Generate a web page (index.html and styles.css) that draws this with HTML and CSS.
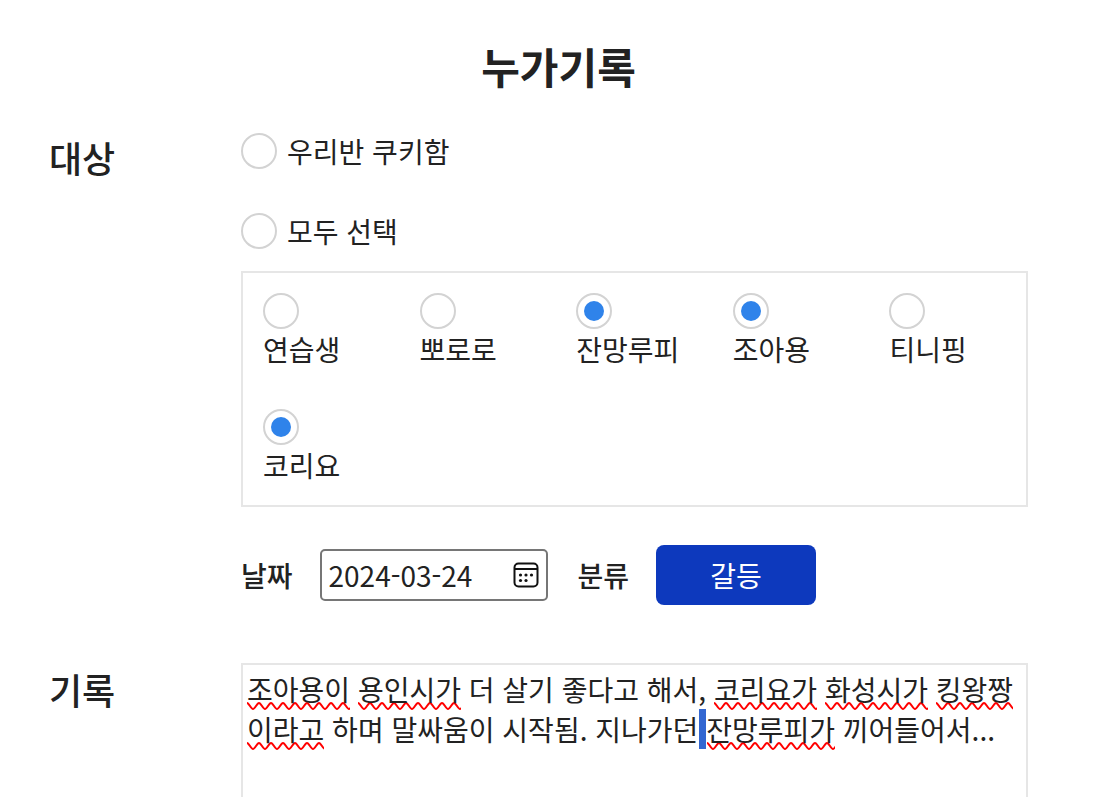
FILE: index.html
```html
<!DOCTYPE html>
<html lang="ko">
<head>
    <meta charset="UTF-8">
    <meta name="viewport" content="width=device-width, initial-scale=1.0">
    <title>누가기록</title>
    <link rel="stylesheet" href="styles.css">
</head>
<body>
    <form class="container">
        <h1>누가기록</h1>

        <section class="row">
            <h2>대상</h2>
            <div class="content">
                <label class="check"><input type="checkbox" name="cookie">우리반 쿠키함</label>
                <label class="check"><input type="checkbox" name="all">모두 선택</label>

                <div class="students">
                    <label class="student"><input type="checkbox" name="student">연습생</label>
                    <label class="student"><input type="checkbox" name="student">뽀로로</label>
                    <label class="student"><input type="checkbox" name="student" checked>잔망루피</label>
                    <label class="student"><input type="checkbox" name="student" checked>조아용</label>
                    <label class="student"><input type="checkbox" name="student">티니핑</label>
                    <label class="student"><input type="checkbox" name="student" checked>코리요</label>
                </div>

                <div class="options">
                    <div class="option">
                        <label for="date">날짜</label>
                        <div class="date-box">
                            <input type="text" id="date" value="2024-03-24">
                            <button type="button" class="calendar" aria-label="달력 열기">
                                <svg width="26" height="26" viewBox="0 0 26 26">
                                    <rect x="1.5" y="1.5" width="23" height="23" rx="4" fill="none" stroke="#111" stroke-width="2"/>
                                    <path d="M2 7h22" stroke="#111" stroke-width="2"/>
                                    <g fill="#111">
                                        <circle cx="7.5" cy="13" r="1.6"/>
                                        <circle cx="13" cy="13" r="1.6"/>
                                        <circle cx="18.5" cy="13" r="1.6"/>
                                        <circle cx="7.5" cy="18.5" r="1.6"/>
                                        <circle cx="13" cy="18.5" r="1.6"/>
                                    </g>
                                </svg>
                            </button>
                        </div>
                    </div>
                    <div class="option">
                        <label for="category">분류</label>
                        <button type="button" class="category" id="category">갈등</button>
                    </div>
                </div>
            </div>
        </section>

        <section class="row">
            <h2><label for="record">기록</label></h2>
            <div class="content record">
                <svg class="marks" width="775" height="80" aria-hidden="true">
                    <defs>
                        <pattern id="wave" width="12" height="8" patternUnits="userSpaceOnUse">
                            <path d="M-3 4C-2 1 -1 1 0 1C2 1 4 7 6 7C8 7 10 1 12 1C13 1 14 1 15 4" fill="none" stroke="red" stroke-width="2"/>
                        </pattern>
                    </defs>
                    <rect x="452" y="40" width="7" height="40" fill="#3367d1"/>
                    <svg x="0" y="33" width="103" height="8"><rect width="100%" height="8" fill="url(#wave)"/></svg>
                    <svg x="111" y="33" width="103" height="8"><rect width="100%" height="8" fill="url(#wave)"/></svg>
                    <svg x="467" y="33" width="103" height="8"><rect width="100%" height="8" fill="url(#wave)"/></svg>
                    <svg x="578" y="33" width="103" height="8"><rect width="100%" height="8" fill="url(#wave)"/></svg>
                    <svg x="689" y="33" width="77" height="8"><rect width="100%" height="8" fill="url(#wave)"/></svg>
                    <svg x="0" y="73" width="77" height="8"><rect width="100%" height="8" fill="url(#wave)"/></svg>
                    <svg x="460" y="73" width="128" height="8"><rect width="100%" height="8" fill="url(#wave)"/></svg>
                </svg>
                <textarea id="record" rows="4" spellcheck="false">조아용이 용인시가 더 살기 좋다고 해서, 코리요가 화성시가 킹왕짱이라고 하며 말싸움이 시작됨. 지나가던 잔망루피가 끼어들어서...</textarea>
            </div>
        </section>
    </form>
</body>
</html>
```
FILE: styles.css
```css
* {
    box-sizing: border-box;
}

body {
    margin: 0;
    background-color: #fff;
    color: #222;
    font-family: "Noto Sans CJK KR", sans-serif;
    font-size: 28px;
    line-height: 40px;
}

input,
button,
textarea {
    margin: 0;
    color: inherit;
    font: inherit;
}

.container {
    padding: 36px 41px 0 49px;
}

h1 {
    margin: 0 0 35px;
    font-size: 42px;
    font-weight: 700;
    line-height: 60px;
    text-align: center;
}

.row {
    display: grid;
    grid-template-columns: 192px 1fr;
    padding-right: 40px;
}

.row + .row {
    margin-top: 58px;
}

h2 {
    margin: 0;
    font-size: 36px;
    font-weight: 500;
    line-height: 52px;
}

.content {
    display: flex;
    flex-direction: column;
}

.check {
    display: flex;
    align-items: center;
    align-self: flex-start;
    gap: 10px;
    margin-bottom: 40px;
}

.check + .check {
    margin-bottom: 20px;
}

input[type="checkbox"] {
    display: grid;
    place-content: center;
    appearance: none;
    width: 36px;
    height: 36px;
    border: 2px solid #d3d3d3;
    border-radius: 50%;
    cursor: pointer;
}

input[type="checkbox"]:checked::before {
    content: "";
    width: 20px;
    height: 20px;
    border-radius: 50%;
    background-color: #2f83ea;
}

.students {
    display: grid;
    grid-template-columns: repeat(5, 1fr);
    border: 2px solid #e6e6e6;
}

.student {
    display: flex;
    flex-direction: column;
    padding: 20px 0 20px 20px;
}

.options {
    display: flex;
    align-items: center;
    gap: 30px;
    margin-top: 38px;
}

.option {
    display: flex;
    align-items: center;
    gap: 27px;
    font-weight: 500;
}

.date-box {
    display: flex;
    align-items: center;
    width: 228px;
    height: 52px;
    padding: 0 7px;
    border: 2px solid #767676;
    border-radius: 5px;
}

.date-box input {
    flex: 1;
    min-width: 0;
    padding: 0;
    border: none;
    outline: none;
    background: none;
    font-weight: 400;
}

.calendar {
    display: flex;
    padding: 0;
    border: none;
    background: none;
    cursor: pointer;
}

.category {
    width: 160px;
    height: 60px;
    padding: 0;
    border: none;
    border-radius: 8px;
    background-color: #0d39bd;
    color: #fff;
    font-weight: 400;
    cursor: pointer;
}

.record {
    position: relative;
}

.record textarea {
    position: relative;
    display: block;
    width: 100%;
    padding: 4px;
    border: 2px solid #e6e6e6;
    outline: none;
    background: none;
    resize: none;
}

/* spelling marks and the selection lie under the text */
.marks {
    position: absolute;
    top: 6px;
    left: 6px;
    overflow: visible;
}
```
